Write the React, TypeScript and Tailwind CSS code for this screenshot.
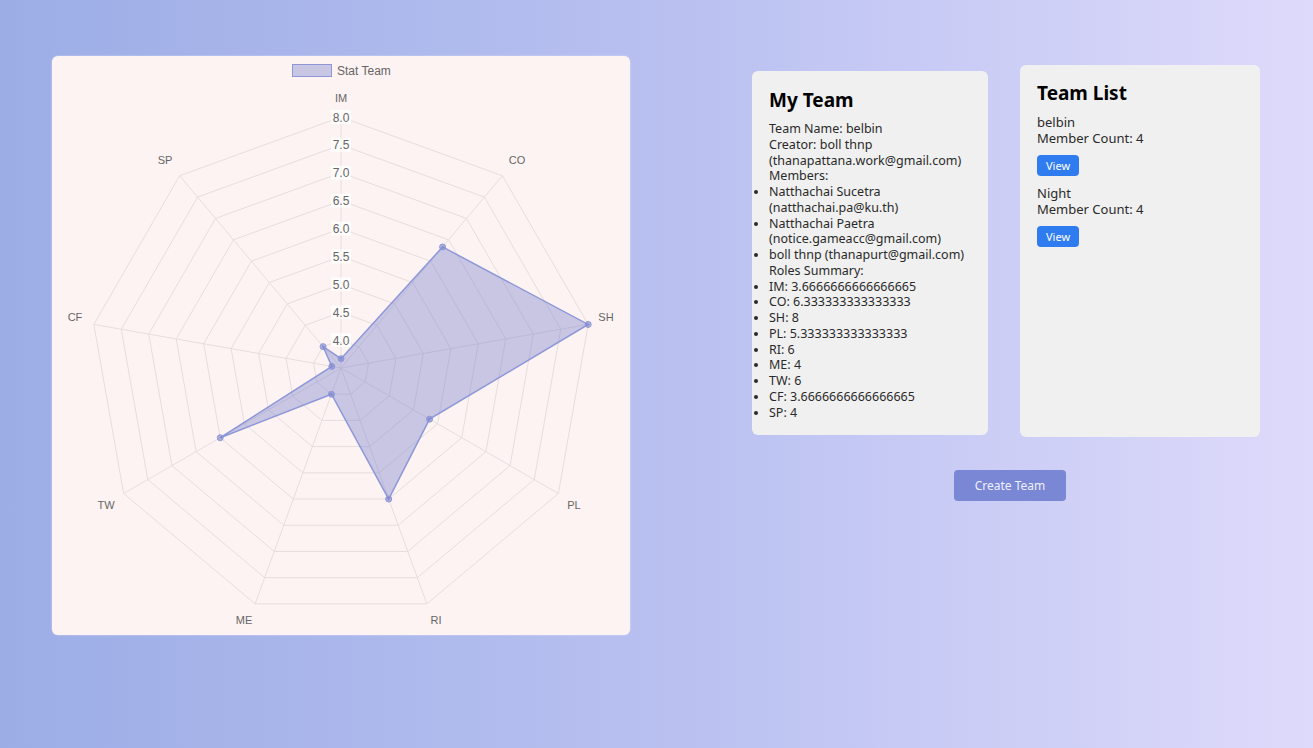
import React from "react";

const CX = 289;
const CY = 312;
const R = 251;
const MIN = 3.5;
const MAX = 8;
const labels = ["IM", "CO", "SH", "PL", "RI", "ME", "TW", "CF", "SP"];
const values = [3.6666666666666665, 6.333333333333333, 8, 5.333333333333333, 6, 4, 6, 3.6666666666666665, 4];

function pt(i: number, v: number) {
  const a = ((-90 + i * 40) * Math.PI) / 180;
  const r = ((v - MIN) / (MAX - MIN)) * R;
  return [CX + r * Math.cos(a), CY + r * Math.sin(a)];
}

const labelPos: [number, number][] = [
  [289, 46],
  [465, 108],
  [554, 265],
  [522, 453],
  [384, 568],
  [192, 568],
  [54, 453],
  [23, 265],
  [113, 108],
];

function Radar() {
  const ticks = [4, 4.5, 5, 5.5, 6, 6.5, 7, 7.5, 8];
  const dataPts = values.map((v, i) => pt(i, v));
  return (
    <svg width="578" height="579" viewBox="0 0 578 579" style={{ fontFamily: '"Liberation Sans", Arial, sans-serif' }}>
      <rect x="240.5" y="8.5" width="39" height="12" fill="rgba(120,130,205,0.4)" stroke="#8e98d8" strokeWidth="1" />
      <text x="285" y="18.5" fontSize="12" fill="#666666">Stat Team</text>
      {ticks.map((t) => {
        const p = labels.map((_, i) => pt(i, t).join(",")).join(" ");
        return <polygon key={t} points={p} fill="none" stroke="#e6dede" strokeWidth="1" />;
      })}
      {labels.map((_, i) => {
        const [x, y] = pt(i, MAX);
        return <line key={i} x1={CX} y1={CY} x2={x} y2={y} stroke="#e6dede" strokeWidth="1" />;
      })}
      <polygon points={dataPts.map((p) => p.join(",")).join(" ")} fill="rgba(120,130,205,0.4)" stroke="#8e98d8" strokeWidth="1.5" />
      {dataPts.map(([x, y], i) => (
        <circle key={i} cx={x} cy={y} r="3" fill="rgba(120,130,205,0.6)" stroke="#8e98d8" strokeWidth="1" />
      ))}
      {ticks.map((t) => {
        const y = CY - ((t - MIN) / (MAX - MIN)) * R;
        return (
          <g key={t}>
            <rect x={CX - 10} y={y - 7} width="20" height="14" fill="rgba(255,255,255,0.75)" />
            <text x={CX} y={y + 4.5} fontSize="12" fill="#666666" textAnchor="middle">
              {t.toFixed(1)}
            </text>
          </g>
        );
      })}
      {labels.map((l, i) => (
        <text key={l} x={labelPos[i][0]} y={labelPos[i][1]} fontSize="11" fill="#666666" textAnchor="middle">
          {l}
        </text>
      ))}
    </svg>
  );
}

export default function App() {
  const font = { fontFamily: '"Noto Sans", "Open Sans", sans-serif' };
  return (
    <div className="min-h-[748px] w-full bg-gradient-to-r from-[#9cade6] via-[#b8c0f0] to-[#dedafb] flex items-start" style={font}>
      <div className="ml-[52px] mt-[56px] w-[578px] h-[579px] rounded-md bg-[#fdf3f2] shadow-[0_0_2px_rgba(255,255,255,0.6)]">
        <Radar />
      </div>
      <div className="ml-[122px] mt-[65px] flex flex-col">
        <div className="flex items-start gap-[32px]">
          <div className="mt-[6px] w-[236px] h-[364px] rounded-md bg-[#f0f0f0] px-[17px] pt-[17px] text-[#2a2a2a] text-[12.5px] leading-[15.75px]">
            <h2 className="text-[19px] font-bold text-black leading-[24px] mb-[9px]">My Team</h2>
            <div>Team Name: belbin</div>
            <div>Creator: boll thnp (thanapattana.work@gmail.com)</div>
            <div>Members:</div>
            <ul className="list-disc">
              <li>Natthachai Sucetra (natthachai.pa@ku.th)</li>
              <li>Natthachai Paetra (notice.gameacc@gmail.com)</li>
              <li>boll thnp (thanapurt@gmail.com)</li>
            </ul>
            <div>Roles Summary:</div>
            <ul className="list-disc">
              <li>IM: 3.6666666666666665</li>
              <li>CO: 6.333333333333333</li>
              <li>SH: 8</li>
              <li>PL: 5.333333333333333</li>
              <li>RI: 6</li>
              <li>ME: 4</li>
              <li>TW: 6</li>
              <li>CF: 3.6666666666666665</li>
              <li>SP: 4</li>
            </ul>
          </div>
          <div className="w-[240px] h-[372px] rounded-md bg-[#f0f0f0] px-[17px] pt-[16px] text-[#2a2a2a] text-[13px] leading-[16px]">
            <h2 className="text-[19px] font-bold text-black leading-[24px] mb-[9px]">Team List</h2>
            <div>belbin</div>
            <div>Member Count: 4</div>
            <button className="mt-[9px] mb-[9px] h-[21px] w-[42px] rounded bg-[#2f7cf0] text-white text-[11px] leading-[21px]">View</button>
            <div>Night</div>
            <div>Member Count: 4</div>
            <button className="mt-[9px] h-[21px] w-[42px] rounded bg-[#2f7cf0] text-white text-[11px] leading-[21px]">View</button>
          </div>
        </div>
        <button className="self-center ml-[8px] mt-[33px] w-[112px] h-[31px] rounded bg-[#7a87d4] text-[#eef0ff] text-[12px]">
          Create Team
        </button>
      </div>
    </div>
  );
}
